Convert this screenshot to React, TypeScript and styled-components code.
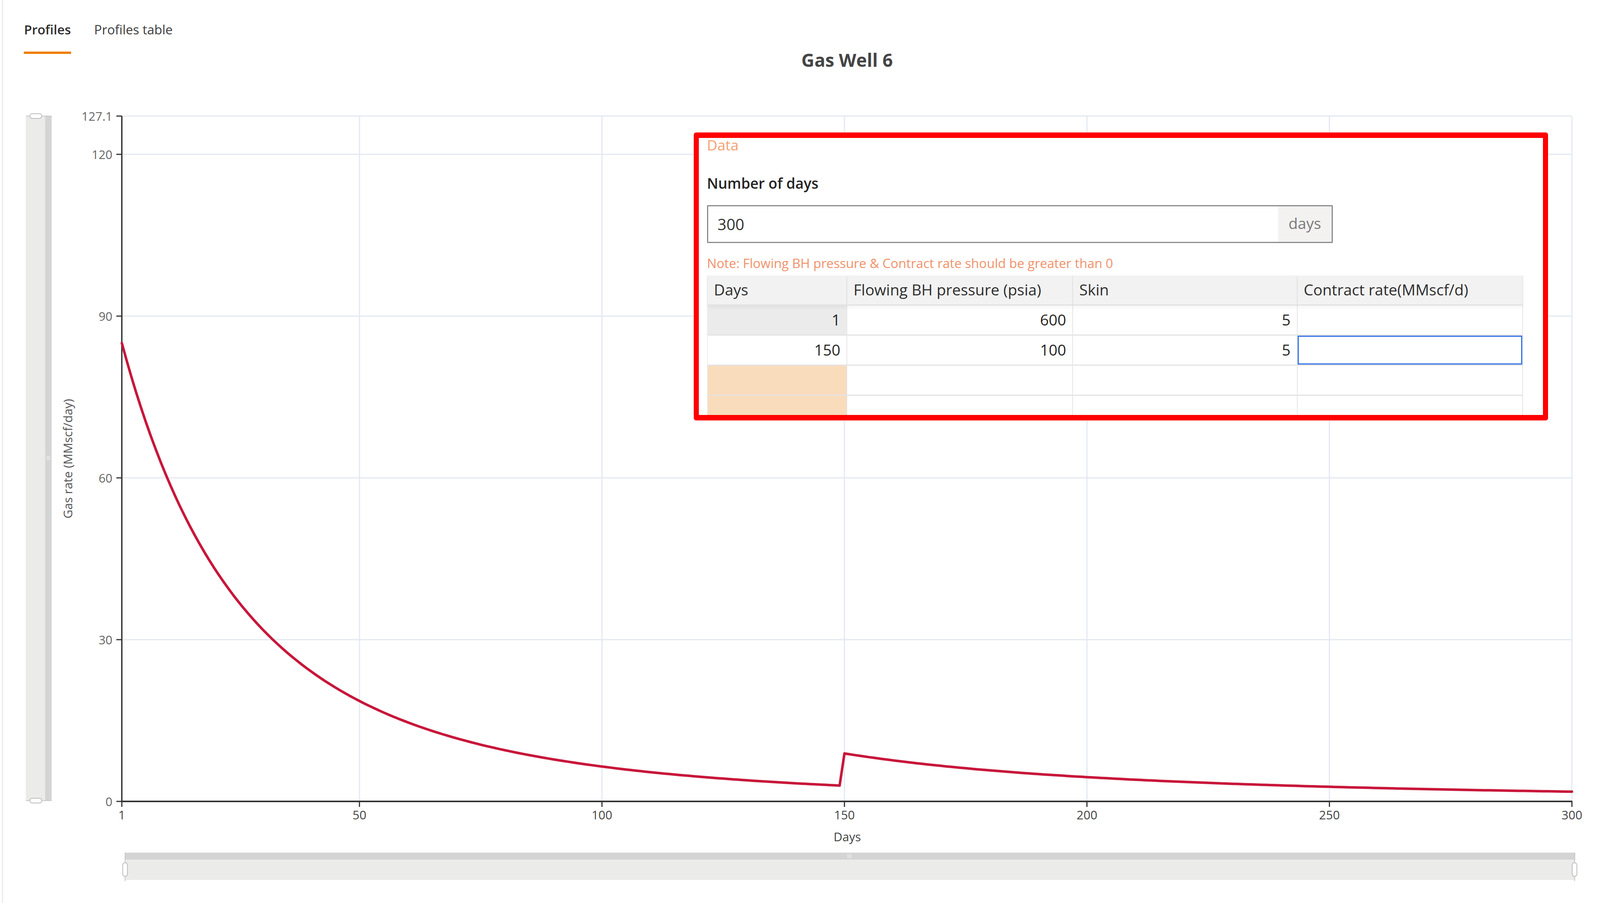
import React from 'react';
import styled, { createGlobalStyle } from 'styled-components';

/* The reference was laid out on a 4400px wide canvas; horizontal measures are
   expressed in that unit (--u) so the page fills whatever width the window has. */
const u = (n: number) => `calc(var(--u) * ${n})`;

const GlobalStyle = createGlobalStyle`
  html, body { margin: 0; padding: 0; background: #ffffff; overflow: hidden; }
  body { font-family: "Open Sans", "Noto Sans", "Liberation Sans", sans-serif; color: #333; }
  :root { --u: calc(100vw / 4400); }
  * { box-sizing: border-box; }
`;

const Page = styled.div`
  width: calc(100vw - 5px);
  height: 2311px;
  margin-left: 5px;
  border-left: 3px solid #ececec;
  overflow: hidden;
  display: flex;
  flex-direction: column;
`;

const TabBar = styled.nav`
  display: flex;
  gap: ${u(64)};
  height: 138px;
  padding: 53px 0 0 calc(var(--u) * 66 - 8px);
`;

const Tab = styled.div<{ $active?: boolean }>`
  font-size: 33px;
  line-height: 46px;
  font-weight: ${(p) => (p.$active ? 600 : 400)};
  color: ${(p) => (p.$active ? '#2f2f2f' : '#3d3d3d')};
  padding-bottom: 33px;
  border-bottom: 6px solid ${(p) => (p.$active ? '#f07e00' : 'transparent')};
  white-space: nowrap;
`;

const ChartTitle = styled.h1`
  margin: 0 0 0 calc(var(--u) * 335 - 8px);
  width: ${u(3989)};
  height: 30px;
  text-align: center;
  font-size: 46px;
  line-height: 30px;
  font-weight: 700;
  color: #454545;
`;

const PlotWrap = styled.div`
  position: relative;
  width: 100%;
  height: 2143px;
`;

const PlotSvg = styled.svg`
  display: block;
  width: 100%;
  height: 2143px;
  font-family: "Open Sans", "Noto Sans", "Liberation Sans", sans-serif;
`;

const DataPanel = styled.section`
  position: absolute;
  left: calc(var(--u) * 1908 - 8px);
  top: 171px;
  width: ${u(2349)};
  height: 737px;
  border: 13px solid #ff0000;
  border-top-width: 14px;
  border-bottom-width: 14px;
  border-radius: 6px;
  background: #ffffff;
  overflow: hidden;
  padding: 0 ${u(22)};
  display: flex;
  flex-direction: column;
  align-items: flex-start;
  & > * { flex-shrink: 0; }
`;

const Legend = styled.div`
  font-size: 37px;
  line-height: 36px;
  color: #f4a070;
`;

const FieldLabel = styled.label`
  margin-top: 58px;
  font-size: 37px;
  line-height: 44px;
  font-weight: 600;
  color: #242424;
`;

const InputGroup = styled.div`
  margin-top: 34px;
  display: flex;
  width: ${u(1721)};
  height: 97px;
  border: 3px solid #8b8b8b;
  border-radius: 2px;
`;

const ValueInput = styled.input`
  flex: 1;
  min-width: 0;
  border: none;
  outline: none;
  padding: 0 0 0 ${u(26)};
  font-family: inherit;
  font-size: 40px;
  color: #333;
  background: transparent;
`;

const Addon = styled.span`
  width: ${u(147)};
  display: flex;
  align-items: center;
  justify-content: center;
  background: #f3f2f1;
  color: #7a7a7a;
  font-size: 39px;
  padding-bottom: 6px;
`;

const Note = styled.p`
  margin: 32px 0 0;
  font-size: 33px;
  line-height: 40px;
  color: #f0916a;
  white-space: nowrap;
`;

const Grid = styled.div`
  margin-top: 11px;
  display: grid;
  width: ${u(2244)};
  grid-template-columns: ${u(384)} ${u(621)} ${u(617)} ${u(620)};
  grid-auto-rows: 77px;
  border-left: 2px solid #ececec;
`;

const HeadCell = styled.div`
  position: relative;
  z-index: 1;
  display: flex;
  align-items: center;
  padding: 0 0 4px ${u(17)};
  background: #f2f2f2;
  border-right: 2px solid #e6e6e6;
  border-bottom: 3px solid #e2e2e2;
  box-shadow: 0 5px 8px rgba(0, 0, 0, 0.045);
  font-size: 39px;
  color: #2e2e2e;
  white-space: nowrap;
  overflow: hidden;
`;

const Cell = styled.div<{ $bg?: string; $focus?: boolean }>`
  display: flex;
  align-items: center;
  justify-content: flex-end;
  padding: 0 ${u(17)} 4px 0;
  background: ${(p) => p.$bg || '#ffffff'};
  border-right: 2px solid #e6e6e6;
  border-bottom: 3px solid #e4e4e4;
  box-shadow: ${(p) => (p.$focus ? 'inset 0 0 0 3px #3574e8' : 'none')};
  font-size: 39px;
  color: #262626;
`;

// ---------- chart data ----------
const rate = (d: number) => {
  if (d < 150) {
    return 85 * Math.pow(1 + 0.3 * 0.03925 * (d - 1), -1 / 0.3);
  }
  return 8.9 * Math.pow(1 + 0.5 * 0.01624 * (d - 150), -2);
};

const yTicks = [0, 30, 60, 90, 120, 127.1];
const xTicks = [1, 50, 100, 150, 200, 250, 300];

const GRID = '#e3e8f2';
const AXIS = '#333333';

function useViewportWidth() {
  const read = () => (typeof document === 'undefined' ? 4400 : document.documentElement.clientWidth || window.innerWidth);
  const [w, setW] = React.useState<number>(read);
  React.useEffect(() => {
    const on = () => setW(read());
    window.addEventListener('resize', on);
    on();
    return () => window.removeEventListener('resize', on);
  }, []);
  return w;
}

function Chart() {
  const W = useViewportWidth();
  const kx = W / 4400;
  const sx = (x: number) => x * kx;
  const X = (d: number) => (335 + (d - 1) * 13.337) * kx;
  const Y = (v: number) => 2051 - v * 13.8;

  const curvePath = React.useMemo(() => {
    const pts: string[] = [];
    for (let d = 1; d <= 300; d += 1) {
      pts.push(`${d === 1 ? 'M' : 'L'}${X(d).toFixed(1)} ${Y(rate(d)).toFixed(1)}`);
    }
    return pts.join(' ');
    // eslint-disable-next-line react-hooks/exhaustive-deps
  }, [kx]);

  return (
    <PlotSvg viewBox={`8 168 ${Math.max(W - 8, 1)} 2143`}>
      {yTicks.filter((v) => v > 0).map((v) => (
        <line key={`h${v}`} x1={X(1)} x2={X(300)} y1={Y(v)} y2={Y(v)} stroke={GRID} strokeWidth={3} />
      ))}
      {xTicks.filter((d) => d > 1).map((d) => (
        <line key={`v${d}`} x1={X(d)} x2={X(d)} y1={Y(127.1)} y2={Y(0)} stroke={GRID} strokeWidth={3} />
      ))}

      <line x1={X(1)} x2={X(1)} y1={Y(127.1)} y2={Y(0) + 2} stroke={AXIS} strokeWidth={3.5} />
      <line x1={X(1) - 2} x2={X(300) + 1} y1={Y(0)} y2={Y(0)} stroke={AXIS} strokeWidth={4} />
      {yTicks.map((v) => (
        <line key={`yt${v}`} x1={X(1) - 14} x2={X(1)} y1={Y(v)} y2={Y(v)} stroke={AXIS} strokeWidth={3} />
      ))}
      {xTicks.map((d) => (
        <line key={`xt${d}`} x1={X(d)} x2={X(d)} y1={Y(0)} y2={Y(0) + 14} stroke={AXIS} strokeWidth={3} />
      ))}

      {yTicks.map((v) => (
        <text key={`yl${v}`} x={X(1) - 24} y={Y(v)} textAnchor="end" dominantBaseline="central" fontSize={31} fill="#666">
          {v}
        </text>
      ))}
      {xTicks.map((d) => (
        <text key={`xl${d}`} x={X(d)} y={2097} textAnchor="middle" fontSize={31} fill="#454545">
          {d}
        </text>
      ))}
      <text x={sx(2330)} y={2153} textAnchor="middle" fontSize={31} fill="#444">Days</text>
      <text
        x={sx(186)}
        y={1174}
        transform={`rotate(-90 ${sx(186)} 1174)`}
        textAnchor="middle"
        dominantBaseline="central"
        fontSize={31}
        fill="#555"
      >
        Gas rate (MMscf/day)
      </text>

      <path d={curvePath} fill="none" stroke="#c8163a" strokeWidth={6.5} strokeLinejoin="round" strokeLinecap="round" />

      {/* vertical data zoom */}
      <rect x={sx(71)} y={297} width={sx(53)} height={1753} fill="#ebebea" />
      <rect x={sx(124)} y={297} width={sx(18)} height={1753} fill="#d4d4d4" />
      {[297, 2049].map((y) => (
        <g key={`vh${y}`}>
          <line x1={sx(71)} x2={sx(142)} y1={y} y2={y} stroke="#c8c8c8" strokeWidth={2} />
          <rect x={sx(82)} y={y - 6} width={sx(33)} height={12} rx={6} fill="#ffffff" stroke="#bcbcbc" strokeWidth={2} />
        </g>
      ))}
      {[1168, 1172, 1176].map((y) => (
        <line key={`vg${y}`} x1={sx(128)} x2={sx(138)} y1={y} y2={y} stroke="#f4f4f4" strokeWidth={1.5} />
      ))}

      {/* horizontal data zoom */}
      <rect x={sx(343)} y={2182} width={sx(3989)} height={18} fill="#d4d4d4" />
      <rect x={sx(343)} y={2200} width={sx(3989)} height={52} fill="#ebebea" />
      {[344, 4330].map((x) => (
        <g key={`hh${x}`}>
          <line x1={sx(x)} x2={sx(x)} y1={2182} y2={2255} stroke="#c8c8c8" strokeWidth={2} />
          <rect x={sx(x) - 6} y={2208} width={12} height={35} rx={6} fill="#ffffff" stroke="#bcbcbc" strokeWidth={2} />
        </g>
      ))}
      {[-4, 0, 4].map((dx) => (
        <line key={`hg${dx}`} x1={sx(2336) + dx} x2={sx(2336) + dx} y1={2186} y2={2196} stroke="#f4f4f4" strokeWidth={1.5} />
      ))}
    </PlotSvg>
  );
}

type Row = { days: string; pressure: string; skin: string; rate: string; daysBg: string; focus?: boolean };

const rows: Row[] = [
  { days: '1', pressure: '600', skin: '5', rate: '', daysBg: '#ebebeb' },
  { days: '150', pressure: '100', skin: '5', rate: '', daysBg: '#ffffff', focus: true },
  { days: '', pressure: '', skin: '', rate: '', daysBg: '#f9dcbb' },
  { days: '', pressure: '', skin: '', rate: '', daysBg: '#f9dcbb' },
];

export default function App() {
  return (
    <>
      <GlobalStyle />
      <Page>
        <TabBar>
          <Tab $active>Profiles</Tab>
          <Tab>Profiles table</Tab>
        </TabBar>
        <ChartTitle>Gas Well 6</ChartTitle>
        <PlotWrap>
          <Chart />
          <DataPanel>
            <Legend>Data</Legend>
            <FieldLabel>Number of days</FieldLabel>
            <InputGroup>
              <ValueInput readOnly value="300" />
              <Addon>days</Addon>
            </InputGroup>
            <Note>Note: Flowing BH pressure &amp; Contract rate should be greater than 0</Note>
            <Grid>
              <HeadCell>Days</HeadCell>
              <HeadCell>Flowing BH pressure (psia)</HeadCell>
              <HeadCell>Skin</HeadCell>
              <HeadCell>Contract rate(MMscf/d)</HeadCell>
              {rows.map((r, i) => (
                <React.Fragment key={i}>
                  <Cell $bg={r.daysBg}>{r.days}</Cell>
                  <Cell>{r.pressure}</Cell>
                  <Cell>{r.skin}</Cell>
                  <Cell $focus={r.focus}>{r.rate}</Cell>
                </React.Fragment>
              ))}
            </Grid>
          </DataPanel>
        </PlotWrap>
      </Page>
    </>
  );
}
